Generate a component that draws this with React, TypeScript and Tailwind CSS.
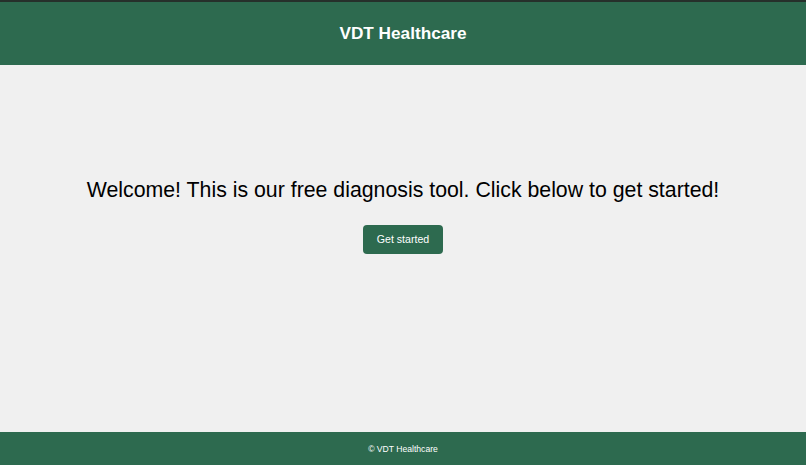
export default function App() {
	return (
		<div
			className="flex min-h-screen flex-col bg-[#f0f0f0]"
			style={{ fontFamily: '"Liberation Sans", Arial, sans-serif' }}
		>
			<header className="flex h-[65px] items-center justify-center border-t-2 border-[#26302b] bg-[#2d6a4f] pt-[1px]">
				<h1 className="text-[17.2px] font-bold text-white">VDT Healthcare</h1>
			</header>
			<main className="flex flex-1 flex-col items-center pt-[113px]">
				<h2 className="text-[21.3px] leading-[25px] text-black">
					Welcome! This is our free diagnosis tool. Click below to get started!
				</h2>
				<button className="mt-[22px] h-[29px] w-[80px] rounded-[4px] bg-[#2d6a4f] text-[10.6px] text-white">
					Get started
				</button>
			</main>
			<footer className="flex h-[33px] items-center justify-center bg-[#2d6a4f] pt-[1px]">
				<p className="text-[8.6px] text-white">© VDT Healthcare</p>
			</footer>
		</div>
	)
}
